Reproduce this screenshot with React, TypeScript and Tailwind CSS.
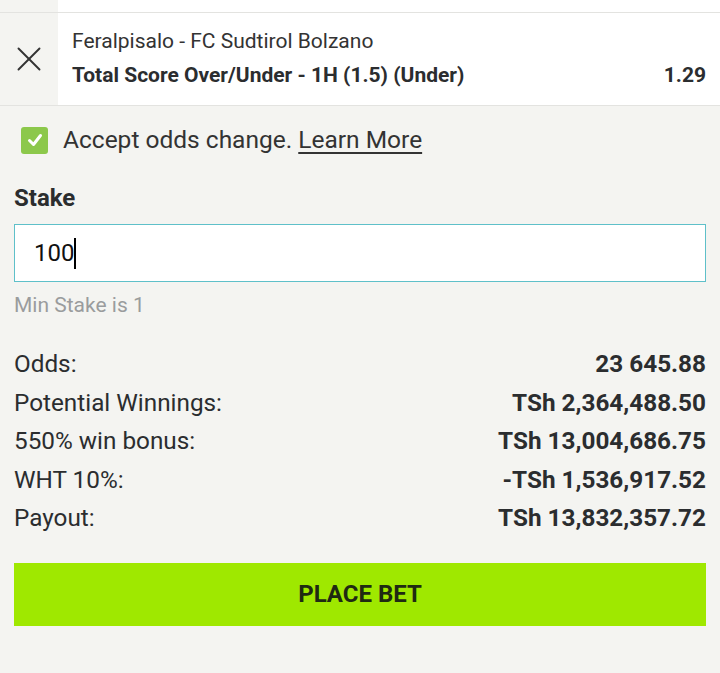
import { X } from "lucide-react";

const rows = [
  { label: "Odds:", value: "23 645.88" },
  { label: "Potential Winnings:", value: "TSh 2,364,488.50" },
  { label: "550% win bonus:", value: "TSh 13,004,686.75" },
  { label: "WHT 10%:", value: "-TSh 1,536,917.52" },
  { label: "Payout:", value: "TSh 13,832,357.72" },
];

export default function App() {
  return (
    <div
      className="w-[720px] h-[673px] bg-[#f4f4f1] text-[#2b2d2f] overflow-hidden"
      style={{ fontFamily: "Roboto, 'Noto Sans', sans-serif" }}
    >
      {/* tail of previous selection */}
      <div className="flex h-[13px] border-b border-[#e3e3e0]">
        <div className="w-[58px]" />
        <div className="flex-1 bg-white" />
      </div>

      {/* selection */}
      <div className="flex h-[93px] border-b border-[#e3e3e0]">
        <div className="w-[58px] flex items-center justify-center">
          <X className="w-[42px] h-[42px] text-[#333]" strokeWidth={1.1} />
        </div>
        <div className="flex-1 bg-white pl-[14px] pr-[14px] pt-[16px]">
          <div className="text-[21px] leading-[24px] text-[#333]">
            Feralpisalo - FC Sudtirol Bolzano
          </div>
          <div className="flex justify-between mt-[10px] text-[21px] leading-[24px] font-bold">
            <span>Total Score Over/Under - 1H (1.5) (Under)</span>
            <span>1.29</span>
          </div>
        </div>
      </div>

      <div className="px-[14px]">
        <div className="flex items-center mt-[20px] pl-[7px]">
          <div className="w-[27px] h-[27px] rounded-[3px] bg-[#8cc84b] flex items-center justify-center">
            <svg width="18" height="18" viewBox="0 0 18 18" fill="none">
              <path
                d="M3.5 9.5 L7.5 13.5 L14.5 4.5"
                stroke="white"
                strokeWidth="3"
                strokeLinecap="round"
                strokeLinejoin="round"
              />
            </svg>
          </div>
          <span className="ml-[15px] text-[24.5px] leading-[28px] text-[#333]">
            Accept odds change. <span className="underline underline-offset-[4px] decoration-[1.5px]">Learn More</span>
          </span>
        </div>

        <div className="mt-[30px] text-[24px] leading-[28px] font-bold">Stake</div>

        <div className="mt-[12px] h-[58px] bg-white border border-[#5ec0c9] flex items-center pl-[19px]">
          <span className="text-[24px] text-[#111]">100</span>
          <span className="w-[2px] h-[31px] bg-black" />
        </div>

        <div className="mt-[11px] text-[21px] leading-[24px] text-[#9a9c9d]">Min Stake is 1</div>

        <div className="mt-[28px] flex flex-col">
          {rows.map((r) => (
            <div key={r.label} className="flex justify-between h-[38.5px] items-center text-[24.3px]">
              <span>{r.label}</span>
              <span className="font-bold">{r.value}</span>
            </div>
          ))}
        </div>

        <button className="mt-[25px] w-full h-[63px] bg-[#9fe800] text-[#1f2a12] text-[24px] font-bold">
          PLACE BET
        </button>
      </div>
    </div>
  );
}
